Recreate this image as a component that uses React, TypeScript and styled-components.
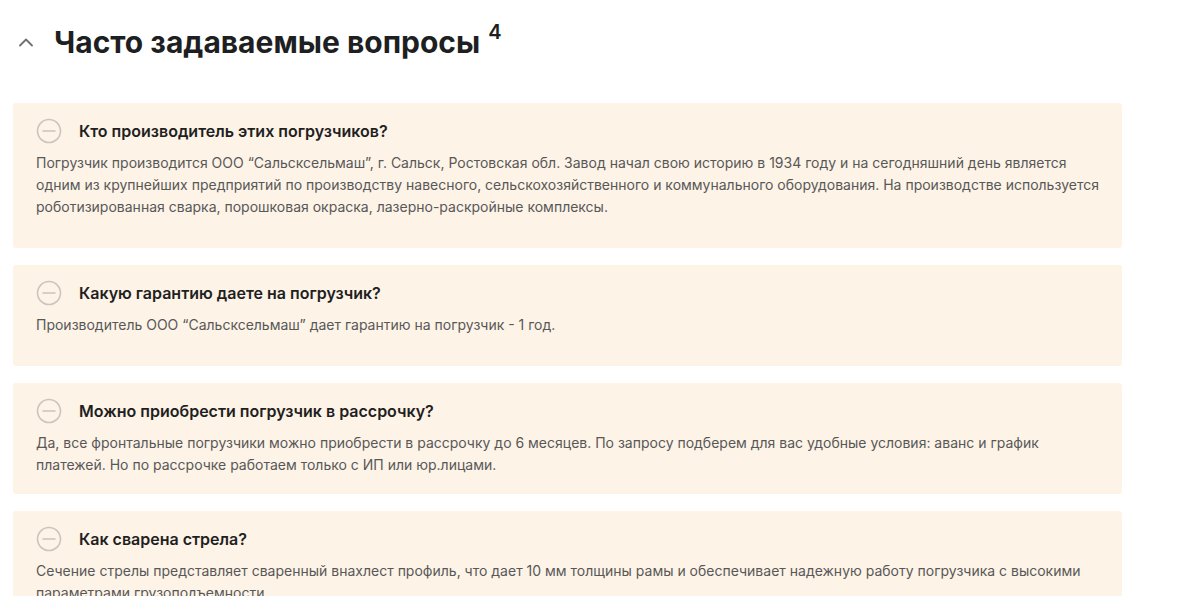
import React from "react";
import styled, { createGlobalStyle } from "styled-components";

type Faq = {
  question: string;
  answer: string;
  tail?: number;
};

const faqs: Faq[] = [
  {
    question: "Кто производитель этих погрузчиков?",
    answer:
      "Погрузчик производится ООО “Сальсксельмаш”, г. Сальск, Ростовская обл. Завод начал свою историю в 1934 году и на сегодняшний день является одним из крупнейших предприятий по производству навесного, сельскохозяйственного и коммунального оборудования. На производстве используется роботизированная сварка, порошковая окраска, лазерно-раскройные комплексы.",
    tail: 30,
  },
  {
    question: "Какую гарантию даете на погрузчик?",
    answer: "Производитель ООО “Сальсксельмаш” дает гарантию на погрузчик - 1 год.",
    tail: 30,
  },
  {
    question: "Можно приобрести погрузчик в рассрочку?",
    answer:
      "Да, все фронтальные погрузчики можно приобрести в рассрочку до 6 месяцев. По запросу подберем для вас удобные условия: аванс и график платежей. Но по рассрочке работаем только с ИП или юр.лицами.",
    tail: 18,
  },
  {
    question: "Как сварена стрела?",
    answer:
      "Сечение стрелы представляет сваренный внахлест профиль, что дает 10 мм толщины рамы и обеспечивает надежную работу погрузчика с высокими параметрами грузоподъемности.",
    tail: 30,
  },
];

const GlobalStyle = createGlobalStyle`
  body {
    margin: 0;
    background: #ffffff;
    font-family: Inter, "Noto Sans", sans-serif;
    color: #222;
  }
`;

const Page = styled.div`
  padding: 22px 56px 0 13px;
`;

const Header = styled.div`
  display: flex;
  align-items: center;
  gap: 20px;
  padding-left: 5px;
  margin-bottom: 41px;
`;

const Toggle = styled.button`
  display: flex;
  align-items: center;
  justify-content: center;
  width: 16px;
  height: 16px;
  padding: 0;
  border: none;
  background: none;
  color: #707070;
  cursor: pointer;
`;

const Title = styled.h2`
  margin: 0;
  font-size: 30px;
  font-weight: 700;
  line-height: 40px;
  color: #1e1f22;
`;

const Count = styled.sup`
  font-size: 20px;
  font-weight: 600;
  line-height: 0;
  margin-left: 8px;
  position: relative;
  top: -3px;
`;

const List = styled.div`
  display: flex;
  flex-direction: column;
  gap: 17px;
`;

const Card = styled.div<{ $tail: number }>`
  background: #fdf3e7;
  border-radius: 3px;
  padding: 18px 22px ${({ $tail }) => $tail}px 23px;
`;

const Question = styled.div`
  display: flex;
  align-items: center;
  gap: 17px;
  height: 20px;
  margin-bottom: 11px;
`;

const QuestionText = styled.span`
  font-size: 16px;
  font-weight: 600;
  color: #1f1f1f;
`;

const Answer = styled.p`
  margin: 0;
  font-size: 14px;
  line-height: 22px;
  color: #585858;
`;

const MinusCircle = () => (
  <svg width="26" height="26" viewBox="0 0 26 26" fill="none">
    <circle cx="13" cy="13" r="11.5" stroke="#cbc5be" strokeWidth="1.6" />
    <path d="M7 13h12" stroke="#cbc5be" strokeWidth="1.6" strokeLinecap="round" />
  </svg>
);

const ChevronUp = () => (
  <svg width="16" height="10" viewBox="0 0 16 10" fill="none">
    <path
      d="M2 8.5 8 2.5l6 6"
      stroke="currentColor"
      strokeWidth="1.8"
      strokeLinecap="round"
      strokeLinejoin="round"
    />
  </svg>
);

export default function App() {
  return (
    <Page>
      <GlobalStyle />
      <Header>
        <Toggle>
          <ChevronUp />
        </Toggle>
        <Title>
          Часто задаваемые вопросы<Count>{faqs.length}</Count>
        </Title>
      </Header>
      <List>
        {faqs.map((item) => (
          <Card key={item.question} $tail={item.tail ?? 30}>
            <Question>
              <MinusCircle />
              <QuestionText>{item.question}</QuestionText>
            </Question>
            <Answer>{item.answer}</Answer>
          </Card>
        ))}
      </List>
    </Page>
  );
}
